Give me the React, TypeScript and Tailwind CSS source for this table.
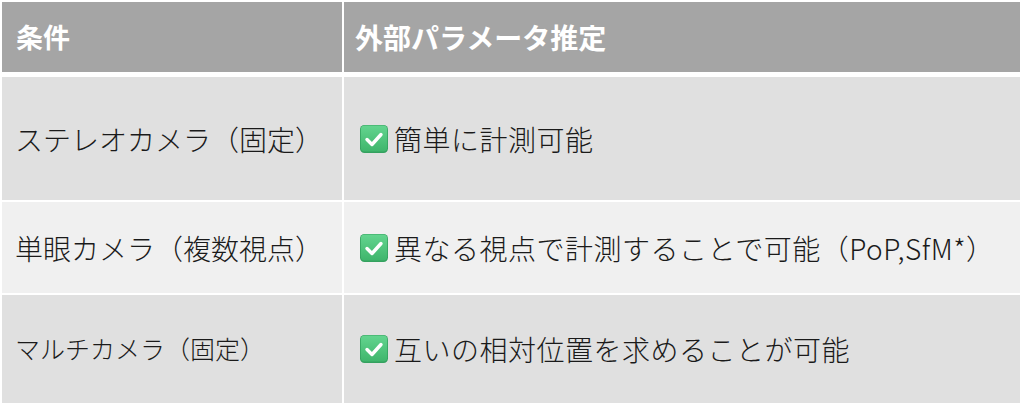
import React from 'react';

const jp = { fontFamily: '"Noto Sans CJK JP", "Noto Sans", sans-serif' };

function Check() {
  return (
    <svg width="28" height="28" viewBox="0 0 28 28" className="shrink-0">
      <defs>
        <linearGradient id="ck" x1="0" y1="0" x2="0" y2="1">
          <stop offset="0" stopColor="#63d58f" />
          <stop offset="1" stopColor="#3fb56c" />
        </linearGradient>
      </defs>
      <rect x="0" y="0" width="28" height="28" rx="4.5" fill="#34a15f" />
      <rect x="0.8" y="0.5" width="26.4" height="26" rx="4" fill="url(#ck)" />
      <path d="M7 14.5 L12 19.5 L21 9.5" fill="none" stroke="#ffffff" strokeWidth="3.4" strokeLinecap="round" strokeLinejoin="round" />
    </svg>
  );
}

const rows = [
  { cond: 'ステレオカメラ（固定）', text: '簡単に計測可能', h: 'h-[123px]', bg: 'bg-[#e0e0e0]', size: 'text-[28px]' },
  { cond: '単眼カメラ（複数視点）', text: '異なる視点で計測することで可能（PoP,SfM*）', h: 'h-[91px]', bg: 'bg-[#f0f0f0]', size: 'text-[28px]' },
  { cond: 'マルチカメラ（固定）', text: '互いの相対位置を求めることが可能', h: 'h-[108px]', bg: 'bg-[#e0e0e0]', size: 'text-[25px]' },
];

export default function App() {
  return (
    <div className="w-[1024px] h-[406px] bg-white pt-[2px] pl-[2px] overflow-hidden" style={jp}>
      <div className="w-[1018px] flex flex-col">
        <div className="grid grid-cols-[340px_1fr] gap-x-[2px] h-[70px] mb-[5px]">
          <div className="bg-[#a5a5a5] flex items-center pl-[14px] text-[27px] font-bold text-white">条件</div>
          <div className="bg-[#a5a5a5] flex items-center pl-[11px] text-[28px] font-bold text-white">外部パラメータ推定</div>
        </div>
        {rows.map((r, i) => (
          <div key={i} className={`grid grid-cols-[340px_1fr] gap-x-[2px] ${r.h} ${i < rows.length - 1 ? 'mb-[2px]' : ''}`}>
            <div className={`${r.bg} flex items-center pl-[13px] ${r.size} font-light text-[#1a1a1a] whitespace-nowrap`}>{r.cond}</div>
            <div className={`${r.bg} flex items-center pl-[16px] gap-[6px] text-[28px] font-light tracking-[0.5px] text-[#1a1a1a] whitespace-nowrap`}>
              <Check />
              <span>{r.text}</span>
            </div>
          </div>
        ))}
      </div>
    </div>
  );
}
